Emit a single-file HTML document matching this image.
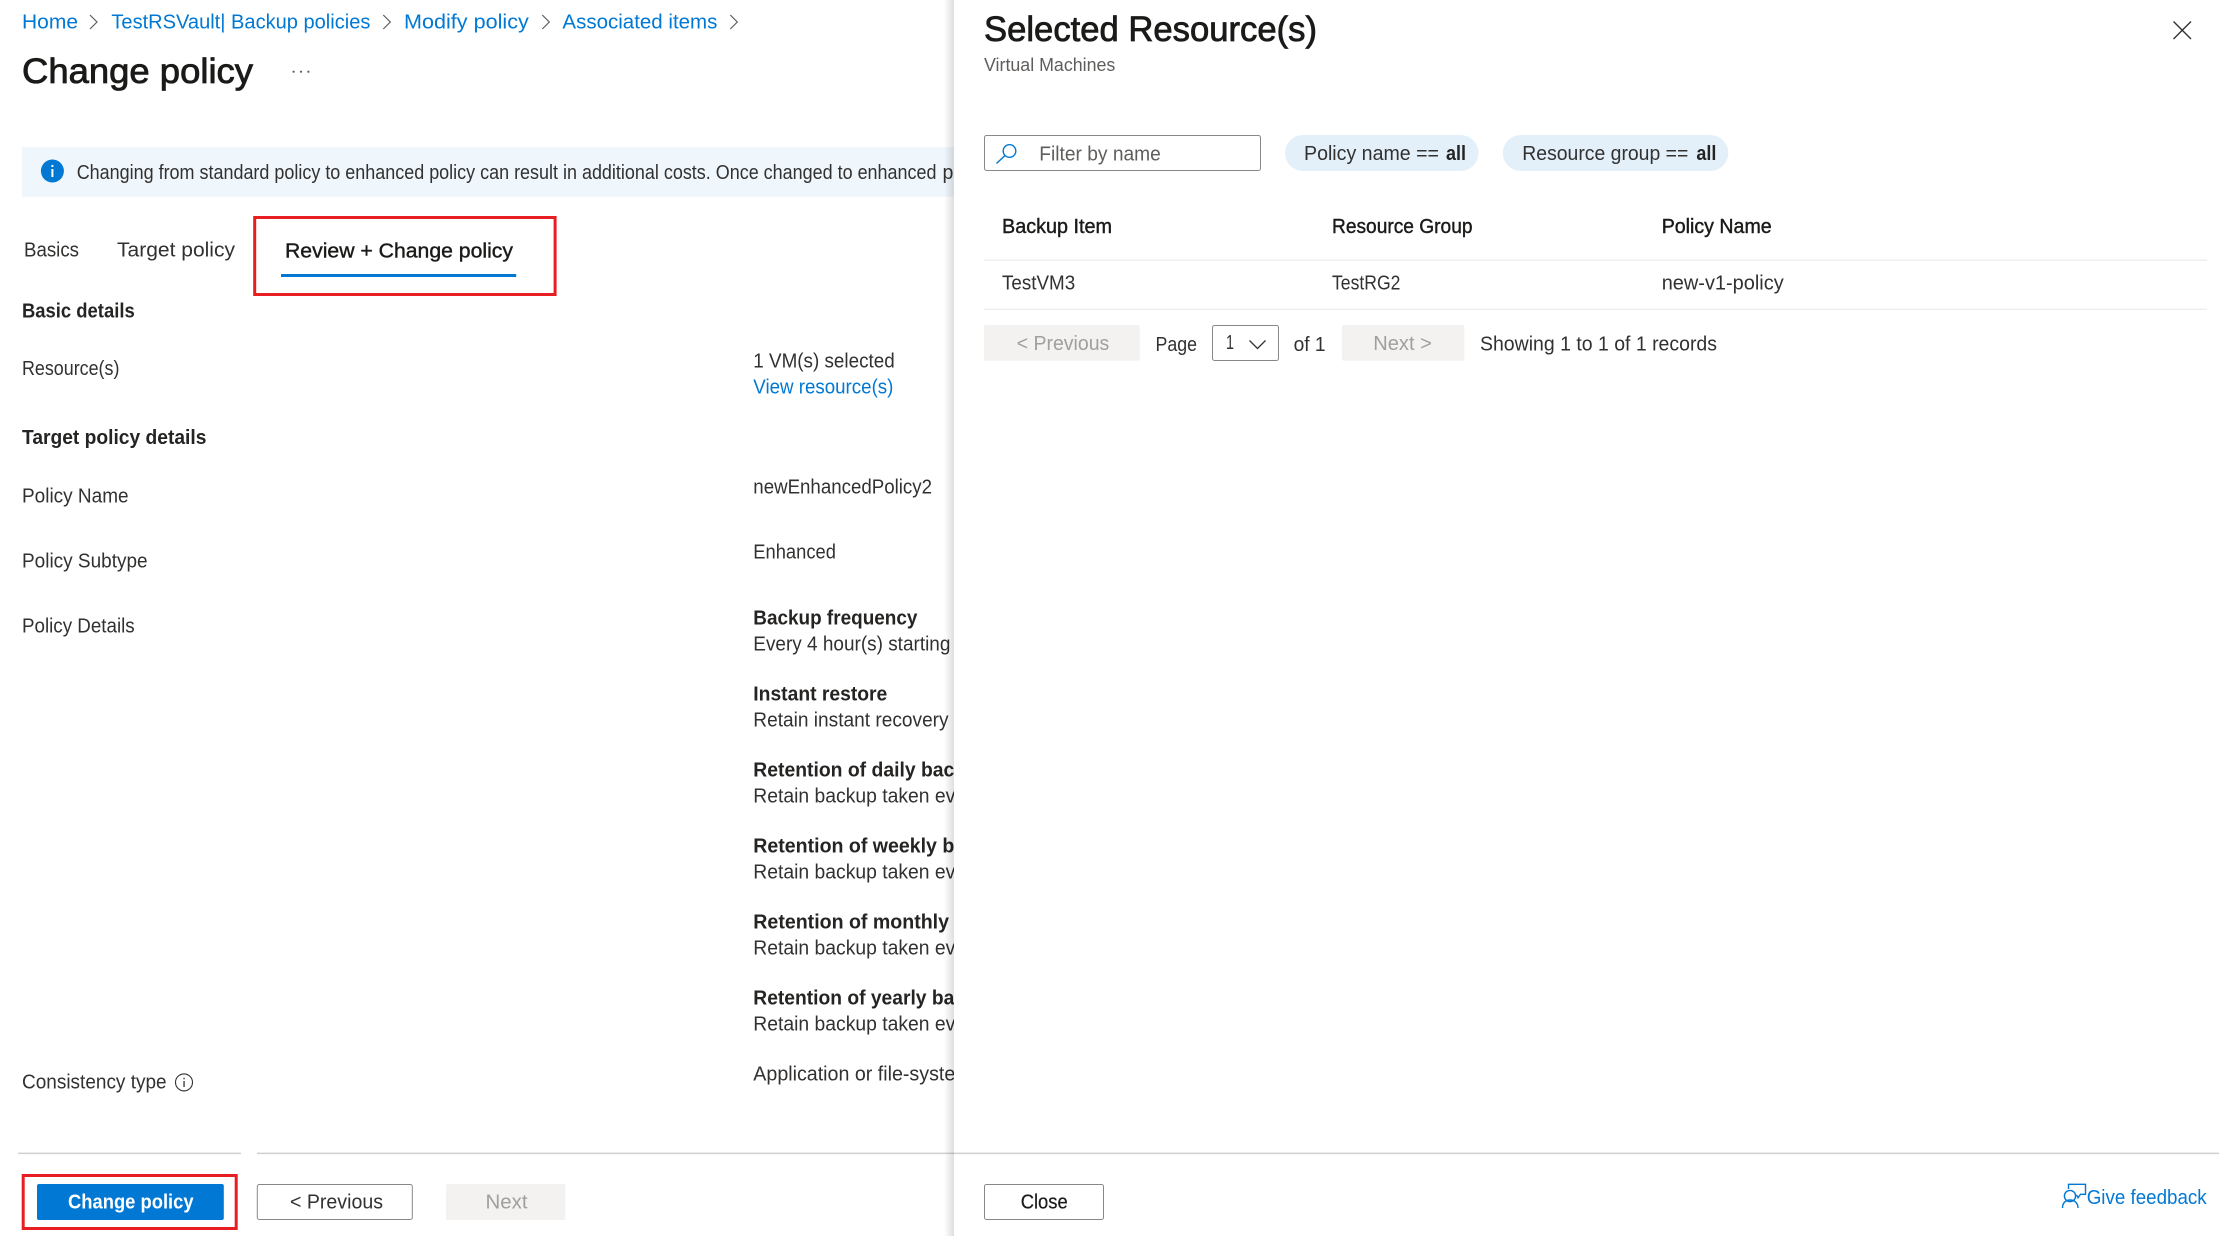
<!DOCTYPE html>
<html lang="en"><head><meta charset="utf-8"><title>Change policy</title>
<style>
html,body{margin:0;padding:0;background:#fff;width:2219px;height:1236px;overflow:hidden}
svg{display:block}
text{font-family:"Liberation Sans",Arial,sans-serif;font-size:20px;fill:#323130;white-space:pre}
.l{fill:#0078d4;font-size:20.5px}
.b{font-weight:700;fill:#252423}
.s{stroke:#1b1a19;stroke-width:.4px;fill:#1b1a19}
.h{font-size:35px;stroke:#1b1a19;stroke-width:.8px;fill:#1b1a19}
.d{fill:#a19f9d}
.g{fill:#605e5c}
</style></head><body>
<svg xmlns="http://www.w3.org/2000/svg" width="2219" height="1236" viewBox="0 0 2219 1236">
<defs><linearGradient id="sh" x1="0" x2="1" y1="0" y2="0"><stop offset="0" stop-color="#000" stop-opacity="0"/><stop offset="1" stop-color="#000" stop-opacity=".13"/></linearGradient></defs>
<rect width="2219" height="1236" fill="#fff"/>

<!-- breadcrumb -->
<text class="l" x="22" y="28.4" textLength="56" lengthAdjust="spacingAndGlyphs">Home</text>
<text class="l" x="111.4" y="28.4" textLength="259" lengthAdjust="spacingAndGlyphs">TestRSVault| Backup policies</text>
<text class="l" x="404" y="28.4" textLength="124.800" lengthAdjust="spacingAndGlyphs">Modify policy</text>
<text class="l" x="562.4" y="28.4" textLength="155" lengthAdjust="spacingAndGlyphs">Associated items</text>
<g fill="none" stroke="#605e5c" stroke-width="1.2">
<path d="M90 15 97 22 90 29"/><path d="M383.300 15 390.300 22 383.300 29"/><path d="M542.300 15 549.300 22 542.300 29"/><path d="M730.300 15 737.300 22 730.300 29"/>
</g>

<!-- title -->
<text class="h" x="22" y="83.200" textLength="231" lengthAdjust="spacingAndGlyphs">Change policy</text>
<g fill="#605e5c"><circle cx="293.600" cy="71.700" r="1.1"/><circle cx="301" cy="71.700" r="1.1"/><circle cx="308.400" cy="71.700" r="1.1"/></g>

<!-- info bar -->
<rect x="22" y="147" width="932" height="49.700" fill="#eff6fc"/>
<circle cx="52.400" cy="171" r="11.500" fill="#0078d4"/>
<rect x="51.400" y="169" width="2" height="8" fill="#fff"/><rect x="51.400" y="165" width="2" height="2" fill="#fff"/>
<text x="76.700" y="179" textLength="859.800" lengthAdjust="spacingAndGlyphs">Changing from standard policy to enhanced policy can result in additional costs. Once changed to enhanced</text>
<text x="942.500" y="179" textLength="50" lengthAdjust="spacingAndGlyphs">policy</text>

<!-- tabs -->
<text x="24" y="256.700" style="font-size:20.5px" textLength="55" lengthAdjust="spacingAndGlyphs">Basics</text>
<text x="117" y="256.700" style="font-size:20.5px" textLength="118" lengthAdjust="spacingAndGlyphs">Target policy</text>
<text class="s" x="285" y="257.500" style="font-size:20.5px" textLength="228" lengthAdjust="spacingAndGlyphs">Review + Change policy</text>
<rect x="281" y="274" width="235.200" height="3" fill="#0078d4"/>
<rect x="254.700" y="217.500" width="300.400" height="77" fill="none" stroke="#e71f22" stroke-width="3"/>

<!-- basic details -->
<text class="b" x="22" y="317.500" textLength="112.700" lengthAdjust="spacingAndGlyphs">Basic details</text>
<text x="22" y="375" textLength="97.400" lengthAdjust="spacingAndGlyphs">Resource(s)</text>
<text x="753.300" y="367.700" textLength="141.400" lengthAdjust="spacingAndGlyphs">1 VM(s) selected</text>
<text class="l" x="753.300" y="393.700" textLength="140.100" lengthAdjust="spacingAndGlyphs">View resource(s)</text>

<text class="b" x="22" y="443.900" textLength="184.400" lengthAdjust="spacingAndGlyphs">Target policy details</text>
<text x="22" y="502.300" textLength="106.600" lengthAdjust="spacingAndGlyphs">Policy Name</text>
<text x="22" y="567.600" textLength="125.600" lengthAdjust="spacingAndGlyphs">Policy Subtype</text>
<text x="22" y="632.500" textLength="112.700" lengthAdjust="spacingAndGlyphs">Policy Details</text>
<text x="22" y="1088.400" textLength="144.600" lengthAdjust="spacingAndGlyphs">Consistency type</text>
<circle cx="184" cy="1082.400" r="8.500" fill="none" stroke="#323130" stroke-width="1.1"/>
<rect x="183.400" y="1081" width="1.300" height="6" fill="#323130"/><rect x="183.400" y="1077.800" width="1.300" height="1.500" fill="#323130"/>

<text x="753.300" y="493.600" textLength="178.700" lengthAdjust="spacingAndGlyphs">newEnhancedPolicy2</text>
<text x="753.300" y="558.700" textLength="82.600" lengthAdjust="spacingAndGlyphs">Enhanced</text>
<text class="b" x="753.300" y="624.600" textLength="164.100" lengthAdjust="spacingAndGlyphs">Backup frequency</text>
<text x="753.300" y="650.600" textLength="197.100" lengthAdjust="spacingAndGlyphs">Every 4 hour(s) starting</text>
<text class="b" x="753.300" y="700.600" textLength="134" lengthAdjust="spacingAndGlyphs">Instant restore</text>
<text x="753.300" y="726.600" textLength="195.300" lengthAdjust="spacingAndGlyphs">Retain instant recovery</text>
<text class="b" x="753.300" y="776.600" textLength="201" lengthAdjust="spacingAndGlyphs">Retention of daily bac</text>
<text x="753.300" y="802.600" textLength="202" lengthAdjust="spacingAndGlyphs">Retain backup taken ev</text>
<text class="b" x="753.300" y="852.600" textLength="201" lengthAdjust="spacingAndGlyphs">Retention of weekly b</text>
<text x="753.300" y="878.600" textLength="202" lengthAdjust="spacingAndGlyphs">Retain backup taken ev</text>
<text class="b" x="753.300" y="928.600" textLength="195.700" lengthAdjust="spacingAndGlyphs">Retention of monthly</text>
<text x="753.300" y="954.600" textLength="202" lengthAdjust="spacingAndGlyphs">Retain backup taken ev</text>
<text class="b" x="753.300" y="1004.600" textLength="201" lengthAdjust="spacingAndGlyphs">Retention of yearly ba</text>
<text x="753.300" y="1030.600" textLength="202" lengthAdjust="spacingAndGlyphs">Retain backup taken ev</text>
<text x="753.300" y="1080.500" textLength="202" lengthAdjust="spacingAndGlyphs">Application or file-syste</text>

<!-- footer left -->
<rect x="18" y="1152.600" width="223" height="1.500" fill="#d2d0ce"/>
<rect x="257" y="1152.600" width="1962" height="1.500" fill="#d2d0ce"/>
<rect x="23.200" y="1175.500" width="213" height="53" fill="none" stroke="#e71f22" stroke-width="3"/>
<rect x="37" y="1184" width="186.800" height="36" rx="2" fill="#0078d4"/>
<text x="68" y="1208.300" style="fill:#fff;font-weight:700" textLength="125.600" lengthAdjust="spacingAndGlyphs">Change policy</text>
<rect x="257.300" y="1184.500" width="155" height="35" rx="2" fill="#fff" stroke="#8a8886"/>
<text x="290" y="1208.300" textLength="93" lengthAdjust="spacingAndGlyphs">&lt; Previous</text>
<rect x="446" y="1184" width="119.400" height="36" rx="2" fill="#f3f2f1"/>
<text class="d" x="485.500" y="1208.300" textLength="42" lengthAdjust="spacingAndGlyphs">Next</text>

<!-- panel -->
<rect x="944" y="0" width="10" height="1236" fill="url(#sh)"/>
<rect x="954" y="0" width="1265" height="1236" fill="#fff"/>
<rect x="954" y="1152.600" width="1265" height="1.500" fill="#d2d0ce"/>

<text class="h" x="984" y="40.800" style="font-size:35px" textLength="333" lengthAdjust="spacingAndGlyphs">Selected Resource(s)</text>
<text class="g" x="984" y="70.800" style="font-size:18.500px" textLength="131.300" lengthAdjust="spacingAndGlyphs">Virtual Machines</text>
<path d="M2173.500 21.500 2191 39M2191 21.500 2173.500 39" stroke="#323130" stroke-width="1.400" fill="none"/>

<rect x="984.500" y="135.500" width="276" height="35" rx="2" fill="#fff" stroke="#8a8886"/>
<circle cx="1009.500" cy="151" r="6.300" fill="none" stroke="#0078d4" stroke-width="1.400"/>
<path d="M1005 155.500 996.500 163.500" stroke="#0078d4" stroke-width="1.500" fill="none"/>
<text class="g" x="1039.300" y="160.700" textLength="121.500" lengthAdjust="spacingAndGlyphs">Filter by name</text>

<rect x="1285" y="135" width="193.500" height="36" rx="18" fill="#e3f0fa"/>
<text x="1304" y="160" textLength="135" lengthAdjust="spacingAndGlyphs">Policy name ==</text>
<text class="b" x="1446" y="160" textLength="20" lengthAdjust="spacingAndGlyphs">all</text>
<rect x="1502.800" y="135" width="225.500" height="36" rx="18" fill="#e3f0fa"/>
<text x="1522.300" y="160" textLength="166" lengthAdjust="spacingAndGlyphs">Resource group ==</text>
<text class="b" x="1696.400" y="160" textLength="20" lengthAdjust="spacingAndGlyphs">all</text>

<text class="s" x="1002" y="232.900" textLength="110" lengthAdjust="spacingAndGlyphs">Backup Item</text>
<text class="s" x="1332" y="232.900" textLength="140.500" lengthAdjust="spacingAndGlyphs">Resource Group</text>
<text class="s" x="1661.700" y="232.900" textLength="110" lengthAdjust="spacingAndGlyphs">Policy Name</text>
<rect x="984" y="259.600" width="1223" height="1.200" fill="#edebe9"/>
<text x="1002" y="289.700" textLength="73.200" lengthAdjust="spacingAndGlyphs">TestVM3</text>
<text x="1332" y="289.700" textLength="68.400" lengthAdjust="spacingAndGlyphs">TestRG2</text>
<text x="1661.700" y="289.700" textLength="122" lengthAdjust="spacingAndGlyphs">new-v1-policy</text>
<rect x="984" y="308.700" width="1223" height="1.200" fill="#edebe9"/>

<rect x="984" y="325" width="155.700" height="35.700" rx="2" fill="#f3f2f1"/>
<text class="d" x="1016.700" y="350" textLength="92.600" lengthAdjust="spacingAndGlyphs">&lt; Previous</text>
<text x="1155.500" y="351" textLength="41.500" lengthAdjust="spacingAndGlyphs">Page</text>
<rect x="1212.500" y="325.500" width="66" height="35" rx="2" fill="#fff" stroke="#8a8886"/>
<text x="1226" y="349" textLength="8" lengthAdjust="spacingAndGlyphs">1</text>
<path d="M1249.500 340.500 1257.500 348.500 1265.500 340.500" fill="none" stroke="#323130" stroke-width="1.300"/>
<text x="1293.600" y="351" textLength="32" lengthAdjust="spacingAndGlyphs">of 1</text>
<rect x="1341.900" y="325" width="122.500" height="35.700" rx="2" fill="#f3f2f1"/>
<text class="d" x="1373.300" y="350" textLength="58.500" lengthAdjust="spacingAndGlyphs">Next &gt;</text>
<text x="1480" y="350.500" textLength="237" lengthAdjust="spacingAndGlyphs">Showing 1 to 1 of 1 records</text>

<rect x="984.500" y="1184.500" width="119" height="35" rx="2" fill="#fff" stroke="#8a8886"/>
<text class="s" x="1020.700" y="1208.300" textLength="47" lengthAdjust="spacingAndGlyphs" style="stroke-width:.2px">Close</text>

<!-- feedback -->
<g fill="none" stroke="#0078d4" stroke-width="1.400">
<circle cx="2070" cy="1196" r="5.600"/>
<path d="M2062.500 1208c0-5 3-8 7.500-8s8 3 8 8"/>
<path d="M2068.500 1189v-4.700h17v10h-5l-2.500 3.500-1.500-3"/>
</g>
<text class="l" x="2086.700" y="1204" textLength="120" lengthAdjust="spacingAndGlyphs">Give feedback</text>
</svg>
</body></html>
